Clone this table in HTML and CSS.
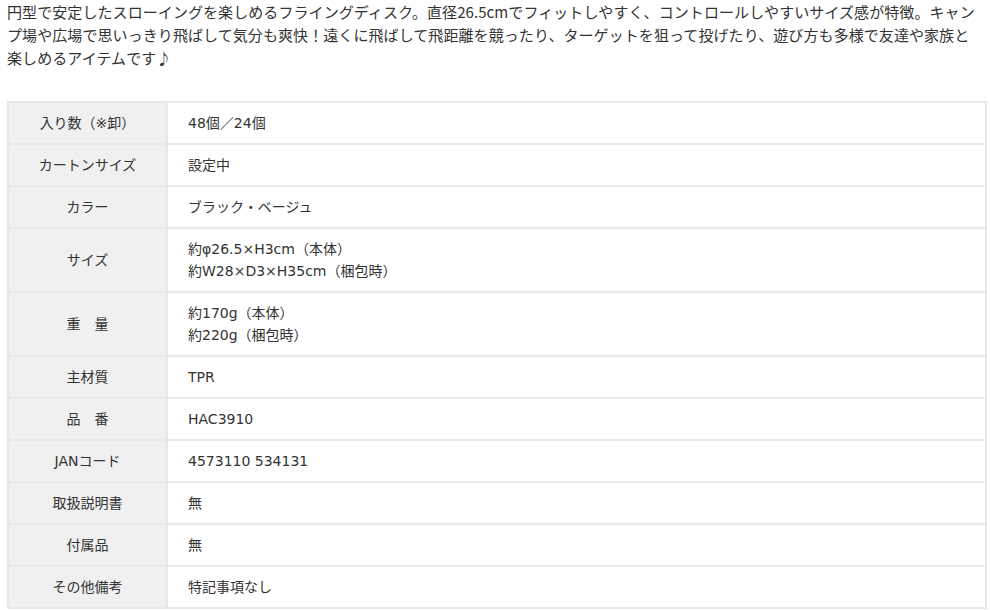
FILE: index.html
```html
<!DOCTYPE html>
<html lang="ja">
<head>
    <meta charset="UTF-8">
    <meta name="viewport" content="width=device-width, initial-scale=1.0">
    <title>フライングディスク 商品仕様</title>
    <link rel="stylesheet" href="styles.css">
</head>
<body>
    <p class="intro">円型で安定したスローイングを楽しめるフライングディスク。直径26.5cmでフィットしやすく、コントロールしやすいサイズ感が特徴。キャンプ場や広場で思いっきり飛ばして気分も爽快！遠くに飛ばして飛距離を競ったり、ターゲットを狙って投げたり、遊び方も多様で友達や家族と楽しめるアイテムです♪</p>

    <table class="spec">
        <tr>
            <th>入り数（※卸）</th>
            <td>48個／24個</td>
        </tr>
        <tr>
            <th>カートンサイズ</th>
            <td>設定中</td>
        </tr>
        <tr>
            <th>カラー</th>
            <td>ブラック・ベージュ</td>
        </tr>
        <tr>
            <th>サイズ</th>
            <td>約φ26.5×H3cm（本体）<br>約W28×D3×H35cm（梱包時）</td>
        </tr>
        <tr>
            <th>重　量</th>
            <td>約170g（本体）<br>約220g（梱包時）</td>
        </tr>
        <tr>
            <th>主材質</th>
            <td>TPR</td>
        </tr>
        <tr>
            <th>品　番</th>
            <td>HAC3910</td>
        </tr>
        <tr>
            <th>JANコード</th>
            <td>4573110 534131</td>
        </tr>
        <tr>
            <th>取扱説明書</th>
            <td>無</td>
        </tr>
        <tr>
            <th>付属品</th>
            <td>無</td>
        </tr>
        <tr>
            <th>その他備考</th>
            <td>特記事項なし</td>
        </tr>
    </table>
</body>
</html>
```

FILE: styles.css
```css
body {
    margin: 0;
    padding-left: 7px;
    width: 980px;
    font-family: "DejaVu Sans", "Noto Sans CJK JP", sans-serif;
    color: #333;
    background-color: white;
}
.intro {
    width: 969px;
    margin: 0 0 32px;
    font-family: "Noto Sans CJK JP", sans-serif;
    font-size: 15px;
    line-height: 23px;
    letter-spacing: 0.08px;
}
.spec {
    width: 980px;
    border-collapse: collapse;
    font-size: 14px;
    line-height: 22px;
}
.spec th,
.spec td {
    border: 2px solid #e8e8e8;
    padding: 9px 20px;
    vertical-align: middle;
}
.spec th {
    width: 117px;
    background-color: #f0f0f0;
    font-weight: normal;
    text-align: center;
}
.spec td {
    text-align: left;
}
```
